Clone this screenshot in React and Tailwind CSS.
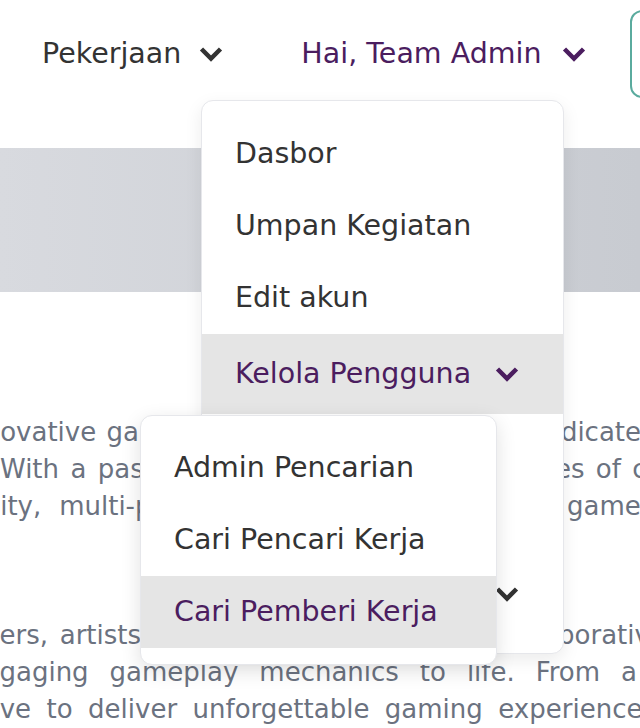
import React from "react";

function Chevron({ className }) {
  return (
    <svg
      className={className}
      width="24"
      height="16"
      viewBox="0 0 24 16"
      fill="none"
      stroke="currentColor"
      strokeWidth="4.5"
      strokeLinejoin="miter"
    >
      <path d="M2.5 3 L12 12.5 L21.5 3" />
    </svg>
  );
}

// each visible line of the scrolled about text
const paraOne = [
  { cls: "-ml-[40px] w-[734px]", text: "innovative game development studio fully dedicated to" },
  { cls: "ml-0 w-[756px]", text: "With a passion for crafting rich experiences of countless" },
  { cls: "-ml-[122px] w-[830px]", text: "high-quality, multi-platform titles and immersive games for" },
];

const paraTwo = [
  { cls: "-ml-[104px] w-[770px]", text: "developers, artists, and designers work in a collaborative" },
  { cls: "-ml-[33px] w-[670px]", text: "engaging gameplay mechanics to life. From a" },
  { cls: "-ml-[42px] w-[698px]", text: "strive to deliver unforgettable gaming experiences" },
];

function Line({ cls, text }) {
  return (
    <div className={`flex shrink-0 justify-between ${cls}`}>
      {text.split(" ").map((w, i) => (
        <span key={i}>{w}</span>
      ))}
    </div>
  );
}

export default function App() {
  return (
    <div className="relative h-[728px] w-[640px] overflow-hidden bg-white font-['DejaVu_Sans',sans-serif]">
      {/* Navbar */}
      <nav className="flex h-[108px] items-center whitespace-nowrap text-[28.5px]">
        <div className="ml-[42px] flex shrink-0 items-center gap-[18px] text-[#333333]">
          Pekerjaan
          <Chevron />
        </div>
        <div className="ml-[78px] flex shrink-0 items-center gap-[20px] text-[#4b1d5f]">
          Hai, Team Admin
          <Chevron />
        </div>
        <div className="ml-[44px] h-[88px] w-[160px] shrink-0 rounded-[12px] border-2 border-[#5aab9e]" />
      </nav>

      {/* Banner */}
      <div className="mt-[40px] h-[144px] bg-linear-to-r from-[#d8dadf] to-[#c8cbd1]" />

      {/* About text */}
      <div className="mt-[122px] text-[26px] leading-[37px] text-[#6b7280]">
        <div className="flex flex-col">
          {paraOne.map((l, i) => (
            <Line key={i} {...l} />
          ))}
        </div>
        <div className="mt-[92px] flex flex-col">
          {paraTwo.map((l, i) => (
            <Line key={i} {...l} />
          ))}
        </div>
      </div>

      {/* User menu */}
      <div className="absolute left-[201px] top-[100px] w-[363px] rounded-[12px] border border-[#e6e7eb] bg-white pt-[17px] pb-[23px] text-[28.5px] text-[#333333] shadow-[0_6px_18px_rgba(0,0,0,0.08)]">
        <div className="flex h-[72px] items-center px-[33px]">Dasbor</div>
        <div className="flex h-[72px] items-center px-[33px]">Umpan Kegiatan</div>
        <div className="flex h-[72px] items-center px-[33px]">Edit akun</div>
        <div className="flex h-[80px] items-center justify-between bg-[#e5e5e5] pl-[33px] pr-[44px] text-[#4b1d5f]">
          Kelola Pengguna
          <Chevron />
        </div>
        <div className="flex h-[72px] items-center px-[33px]">Laporan</div>
        <div className="flex h-[72px] items-center px-[33px]">Kelola Blog</div>
        <div className="flex h-[72px] items-center justify-between pl-[33px] pr-[44px]">
          Pengaturan
          <Chevron />
        </div>
      </div>

      {/* Kelola Pengguna submenu */}
      <div className="absolute left-[140px] top-[415px] w-[357px] rounded-[12px] border border-[#e6e7eb] bg-white pt-[16px] pb-[16px] text-[28.5px] text-[#333333] shadow-[0_6px_20px_rgba(0,0,0,0.12)]">
        <div className="flex h-[72px] items-center px-[33px]">Admin Pencarian</div>
        <div className="flex h-[72px] items-center px-[33px]">Cari Pencari Kerja</div>
        <div className="flex h-[72px] items-center bg-[#e5e5e5] px-[33px] text-[#4b1d5f]">
          Cari Pemberi Kerja
        </div>
      </div>
    </div>
  );
}
